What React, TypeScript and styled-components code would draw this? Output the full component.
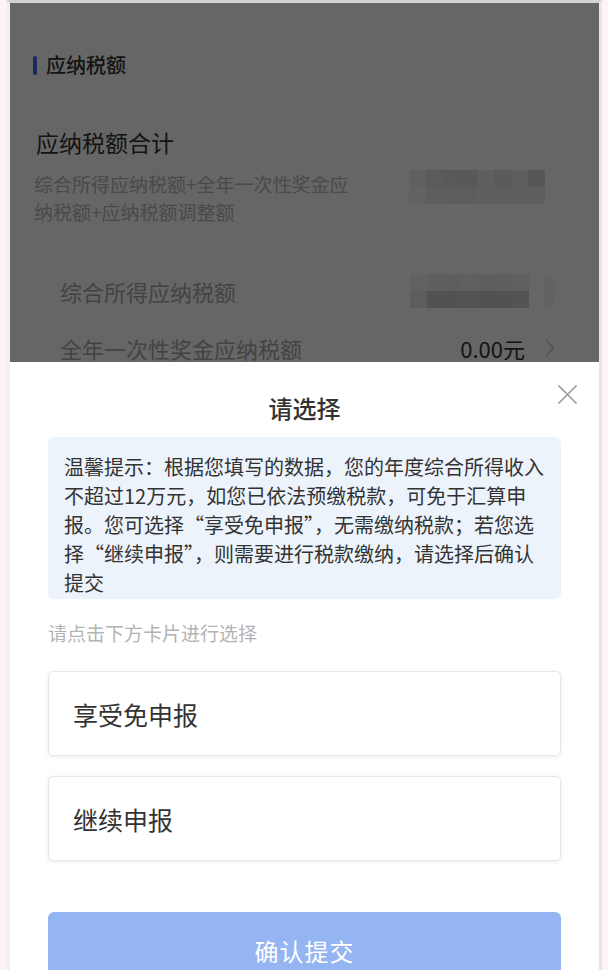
import React from 'react';
import styled, {createGlobalStyle} from 'styled-components';

const mosaicTotal = [
    [240, 228, 222, 220, 236, 226, 234, 214],
    [246, 236, 232, 232, 238, 234, 236, 236],
];

const mosaicIncome = [
    [244, 238, 236, 240, 236, 238, 240],
    [232, 204, 206, 208, 206, 204, 210],
];

const noticeText =
    '温馨提示：根据您填写的数据，您的年度综合所得收入不超过12万元，如您已依法预缴税款，可免于汇算申报。您可选择“享受免申报”，无需缴纳税款；若您选择“继续申报”，则需要进行税款缴纳，请选择后确认提交';

const Chevron = () => (
    <ChevronIcon viewBox="0 0 10 18" aria-hidden="true">
        <path d="M1.5 1.5 L8.5 9 L1.5 16.5" fill="none" stroke="currentColor" strokeWidth="1.4" strokeLinecap="round" strokeLinejoin="round"/>
    </ChevronIcon>
);

const Mosaic = ({rows}: {rows: number[][]}) => (
    <MosaicGrid>
        {rows.map((row, i) => (
            <MosaicRow key={i}>
                {row.map((shade, j) => <MosaicCell key={j} $shade={shade}/>)}
            </MosaicRow>
        ))}
    </MosaicGrid>
);

const App = () => {

    return (
        <>
            <GlobalStyle/>
            <Frame>
                <Screen>
                    <Page>
                        <PageBody>
                            <SectionHeader>
                                <SectionBar/>
                                <SectionTitle>应纳税额</SectionTitle>
                            </SectionHeader>

                            <TotalTitle>应纳税额合计</TotalTitle>
                            <TotalRow>
                                <TotalDesc>综合所得应纳税额+全年一次性奖金应纳税额+应纳税额调整额</TotalDesc>
                                <Mosaic rows={mosaicTotal}/>
                            </TotalRow>

                            <ItemList>
                                <ItemRow>
                                    <ItemLabel>综合所得应纳税额</ItemLabel>
                                    <ItemValue $gap={14}>
                                        <Mosaic rows={mosaicIncome}/>
                                        <BlurDot/>
                                    </ItemValue>
                                </ItemRow>
                                <ItemRow>
                                    <ItemLabel>全年一次性奖金应纳税额</ItemLabel>
                                    <ItemValue $gap={20}>
                                        <Amount>0.00元</Amount>
                                        <Chevron/>
                                    </ItemValue>
                                </ItemRow>
                            </ItemList>
                        </PageBody>
                        <Mask/>
                    </Page>

                    <Sheet>
                        <SheetHeader>
                            <SheetTitle>请选择</SheetTitle>
                            <CloseButton type="button" aria-label="关闭">
                                <svg viewBox="0 0 24 24" width="23" height="23">
                                    <path d="M3 3 L21 21 M21 3 L3 21" stroke="currentColor" strokeWidth="1.5" strokeLinecap="round"/>
                                </svg>
                            </CloseButton>
                        </SheetHeader>

                        <Notice>{noticeText}</Notice>
                        <Hint>请点击下方卡片进行选择</Hint>

                        <Options>
                            <OptionCard type="button">享受免申报</OptionCard>
                            <OptionCard type="button">继续申报</OptionCard>
                        </Options>

                        <SubmitBtn type="button">确认提交</SubmitBtn>
                    </Sheet>
                </Screen>
            </Frame>
        </>
    );
}


export default App;

const SubmitBtn = styled.button`
  margin-top: 51px;
  height: 76px;
  flex-shrink: 0;
  border: none;
  border-radius: 6px;
  background-color: #94b5f1;
  color: #fff;
  font-family: inherit;
  font-size: 24px;
  letter-spacing: 1px;
`;

const OptionCard = styled.button`
  height: 85px;
  padding: 0 24px;
  text-align: left;
  background-color: #fff;
  border: 1px solid #e8e8e8;
  border-radius: 5px;
  box-shadow: 0 1px 4px rgba(0, 0, 0, .08);
  color: #333;
  font-family: inherit;
  font-size: 25px;
`;

const Options = styled.div`
  display: flex;
  flex-direction: column;
  gap: 20px;
  margin-top: 25px;
`;

const Hint = styled.p`
  margin: 21px 0 0;
  font-size: 19px;
  line-height: 26px;
  color: #b3b3b3;
`;

const Notice = styled.p`
  margin: 12px 0 0;
  padding: 15px 16px 2px;
  background-color: #edf3fb;
  border-radius: 6px;
  font-size: 20px;
  line-height: 29px;
  color: #333;
`;

const CloseButton = styled.button`
  position: absolute;
  top: 21px;
  right: -18px;
  padding: 0;
  border: none;
  background: none;
  color: #9d9d9d;
  display: flex;
`;

const SheetTitle = styled.h2`
  margin: 0;
  font-size: 24px;
  line-height: 34px;
  font-weight: 500;
  color: #333;
`;

const SheetHeader = styled.div`
  position: relative;
  display: flex;
  justify-content: center;
  padding-top: 29px;
`;

const Sheet = styled.div`
  flex: 1;
  display: flex;
  flex-direction: column;
  padding: 0 38px;
  background-color: #fff;
`;

const Mask = styled.div`
  position: absolute;
  inset: 0;
  background-color: rgba(0, 0, 0, .6);
`;

const Amount = styled.span`
  font-size: 22px;
  color: #333;
`;

const ChevronIcon = styled.svg`
  width: 10px;
  height: 18px;
  color: #c8c8c8;
`;

const BlurDot = styled.span`
  width: 12px;
  height: 32px;
  border-radius: 6px;
  background-color: #f4f4f4;
`;

const ItemValue = styled.div<{$gap: number}>`
  display: flex;
  align-items: center;
  gap: ${p => p.$gap}px;
`;

const ItemLabel = styled.span`
  font-size: 22px;
  color: #a8a8a8;
`;

const ItemRow = styled.div`
  display: flex;
  align-items: center;
  justify-content: space-between;
  height: 57px;
  padding: 0 20px 0 28px;
`;

const ItemList = styled.div`
  display: flex;
  flex-direction: column;
  margin-top: 36px;
`;

const MosaicCell = styled.span<{$shade: number}>`
  width: 17px;
  height: 17px;
  background-color: ${p => `rgb(${p.$shade}, ${p.$shade}, ${p.$shade})`};
`;

const MosaicRow = styled.div`
  display: flex;
`;

const MosaicGrid = styled.div`
  display: flex;
  flex-direction: column;
  filter: blur(.6px);
`;

const TotalDesc = styled.p`
  margin: 0;
  width: 320px;
  font-size: 19px;
  line-height: 28px;
  color: #b8b8b8;
`;

const TotalRow = styled.div`
  display: flex;
  align-items: flex-start;
  justify-content: space-between;
  margin-top: 12px;
  padding: 0 30px 0 2px;
`;

const TotalTitle = styled.h3`
  margin: 47px 0 0 4px;
  font-size: 23px;
  line-height: 32px;
  font-weight: 400;
  color: #333;
`;

const SectionTitle = styled.h2`
  margin: 0;
  font-size: 20px;
  line-height: 28px;
  font-weight: 500;
  color: #333;
`;

const SectionBar = styled.span`
  width: 4px;
  height: 19px;
  border-radius: 2px;
  background-color: #3b6fe8;
`;

const SectionHeader = styled.div`
  display: flex;
  align-items: center;
  gap: 9px;
  margin-top: 48px;
  padding-left: 1px;
`;

const PageBody = styled.div`
  display: flex;
  flex-direction: column;
  padding: 0 24px 0 22px;
`;

const Page = styled.div`
  position: relative;
  height: 359px;
  flex-shrink: 0;
  overflow: hidden;
  background-color: #fff;
`;

const Screen = styled.div`
  flex: 1;
  display: flex;
  flex-direction: column;
  border-top: 3px solid #d2d2d2;
  border-left: 4px solid #f1f1f1;
  border-right: 3px solid #e6e6e6;
  overflow: hidden;
`;

const Frame = styled.div`
  display: flex;
  height: 970px;
  padding: 0 6px;
  background-color: #fbf6f4;
  overflow: hidden;
`;

const GlobalStyle = createGlobalStyle`
  body {
    margin: 0;
    background-color: #fbf6f4;
    font-family: "Noto Sans CJK SC", "Noto Sans", sans-serif;
  }

  * {
    box-sizing: border-box;
  }
`;
